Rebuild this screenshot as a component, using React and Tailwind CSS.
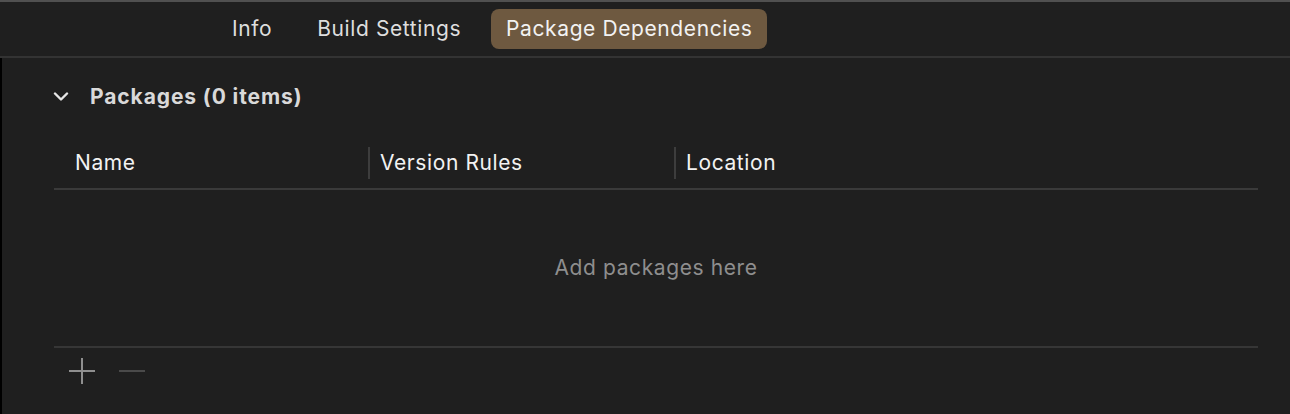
import React from 'react';

const tabs = ['Info', 'Build Settings', 'Package Dependencies'];

const App = () => {
  const active = 'Package Dependencies';

  return (
    <div
      className="w-[1290px] h-[414px] bg-[#1f1f1f] flex flex-col overflow-hidden"
      style={{ fontFamily: 'Inter, "Open Sans", sans-serif' }}
    >
      {/* top edge */}
      <div className="h-[2px] bg-[#505050]" />

      {/* tab bar */}
      <div className="h-[56px] flex items-center pl-[217px] gap-[15px] border-b-2 border-[#333333]">
        {tabs.map((tab) => (
          <div
            key={tab}
            className={`h-[40px] px-[15px] flex items-center rounded-[8px] text-[21px] tracking-[0.6px] ${
              tab === active ? 'bg-[#6e5940] text-[#f2f2f2]' : 'text-[#dedede]'
            }`}
          >
            {tab}
          </div>
        ))}
      </div>

      {/* content */}
      <div className="flex-1 border-l-2 border-black pl-[52px] pr-[32px] flex flex-col">
        {/* section header */}
        <div className="h-[76px] flex items-center pt-[1px]">
          <svg width="16" height="10" viewBox="0 0 16 10" className="ml-[-1px]">
            <path d="M2 1.5 L8 7.5 L14 1.5" fill="none" stroke="#e6e6e6" strokeWidth="2.4" strokeLinecap="round" strokeLinejoin="round" />
          </svg>
          <span className="ml-[21px] text-[21px] tracking-[0.9px] font-bold text-[#d9d9d9]">Packages (0 items)</span>
        </div>

        {/* table */}
        <div className="flex flex-col">
          <div className="h-[56px] flex items-center border-b-2 border-[#3a3a3a] pt-[3px]">
            <div className="w-[314px] pl-[21px] text-[21px] tracking-[0.6px] text-[#f2f2f2]">Name</div>
            <div className="w-[2px] h-[32px] bg-[#3d3d3d]" />
            <div className="w-[304px] pl-[10px] text-[21px] tracking-[0.6px] text-[#f2f2f2]">Version Rules</div>
            <div className="w-[2px] h-[32px] bg-[#3d3d3d]" />
            <div className="flex-1 pl-[10px] text-[21px] tracking-[0.6px] text-[#f2f2f2]">Location</div>
          </div>
          <div className="h-[158px] flex items-center justify-center border-b-2 border-[#363636]">
            <span className="text-[21px] tracking-[0.6px] text-[#8e8e8e]">Add packages here</span>
          </div>
          <div className="h-[46px] flex items-center pl-[14px] gap-[22px]">
            <svg width="28" height="28" viewBox="0 0 28 28">
              <path d="M14 1 V27 M1 14 H27" stroke="#8f8f8f" strokeWidth="2" />
            </svg>
            <svg width="28" height="28" viewBox="0 0 28 28">
              <path d="M1 14 H27" stroke="#4a4a4a" strokeWidth="2" />
            </svg>
          </div>
        </div>
      </div>
    </div>
  );
};

export default App;
